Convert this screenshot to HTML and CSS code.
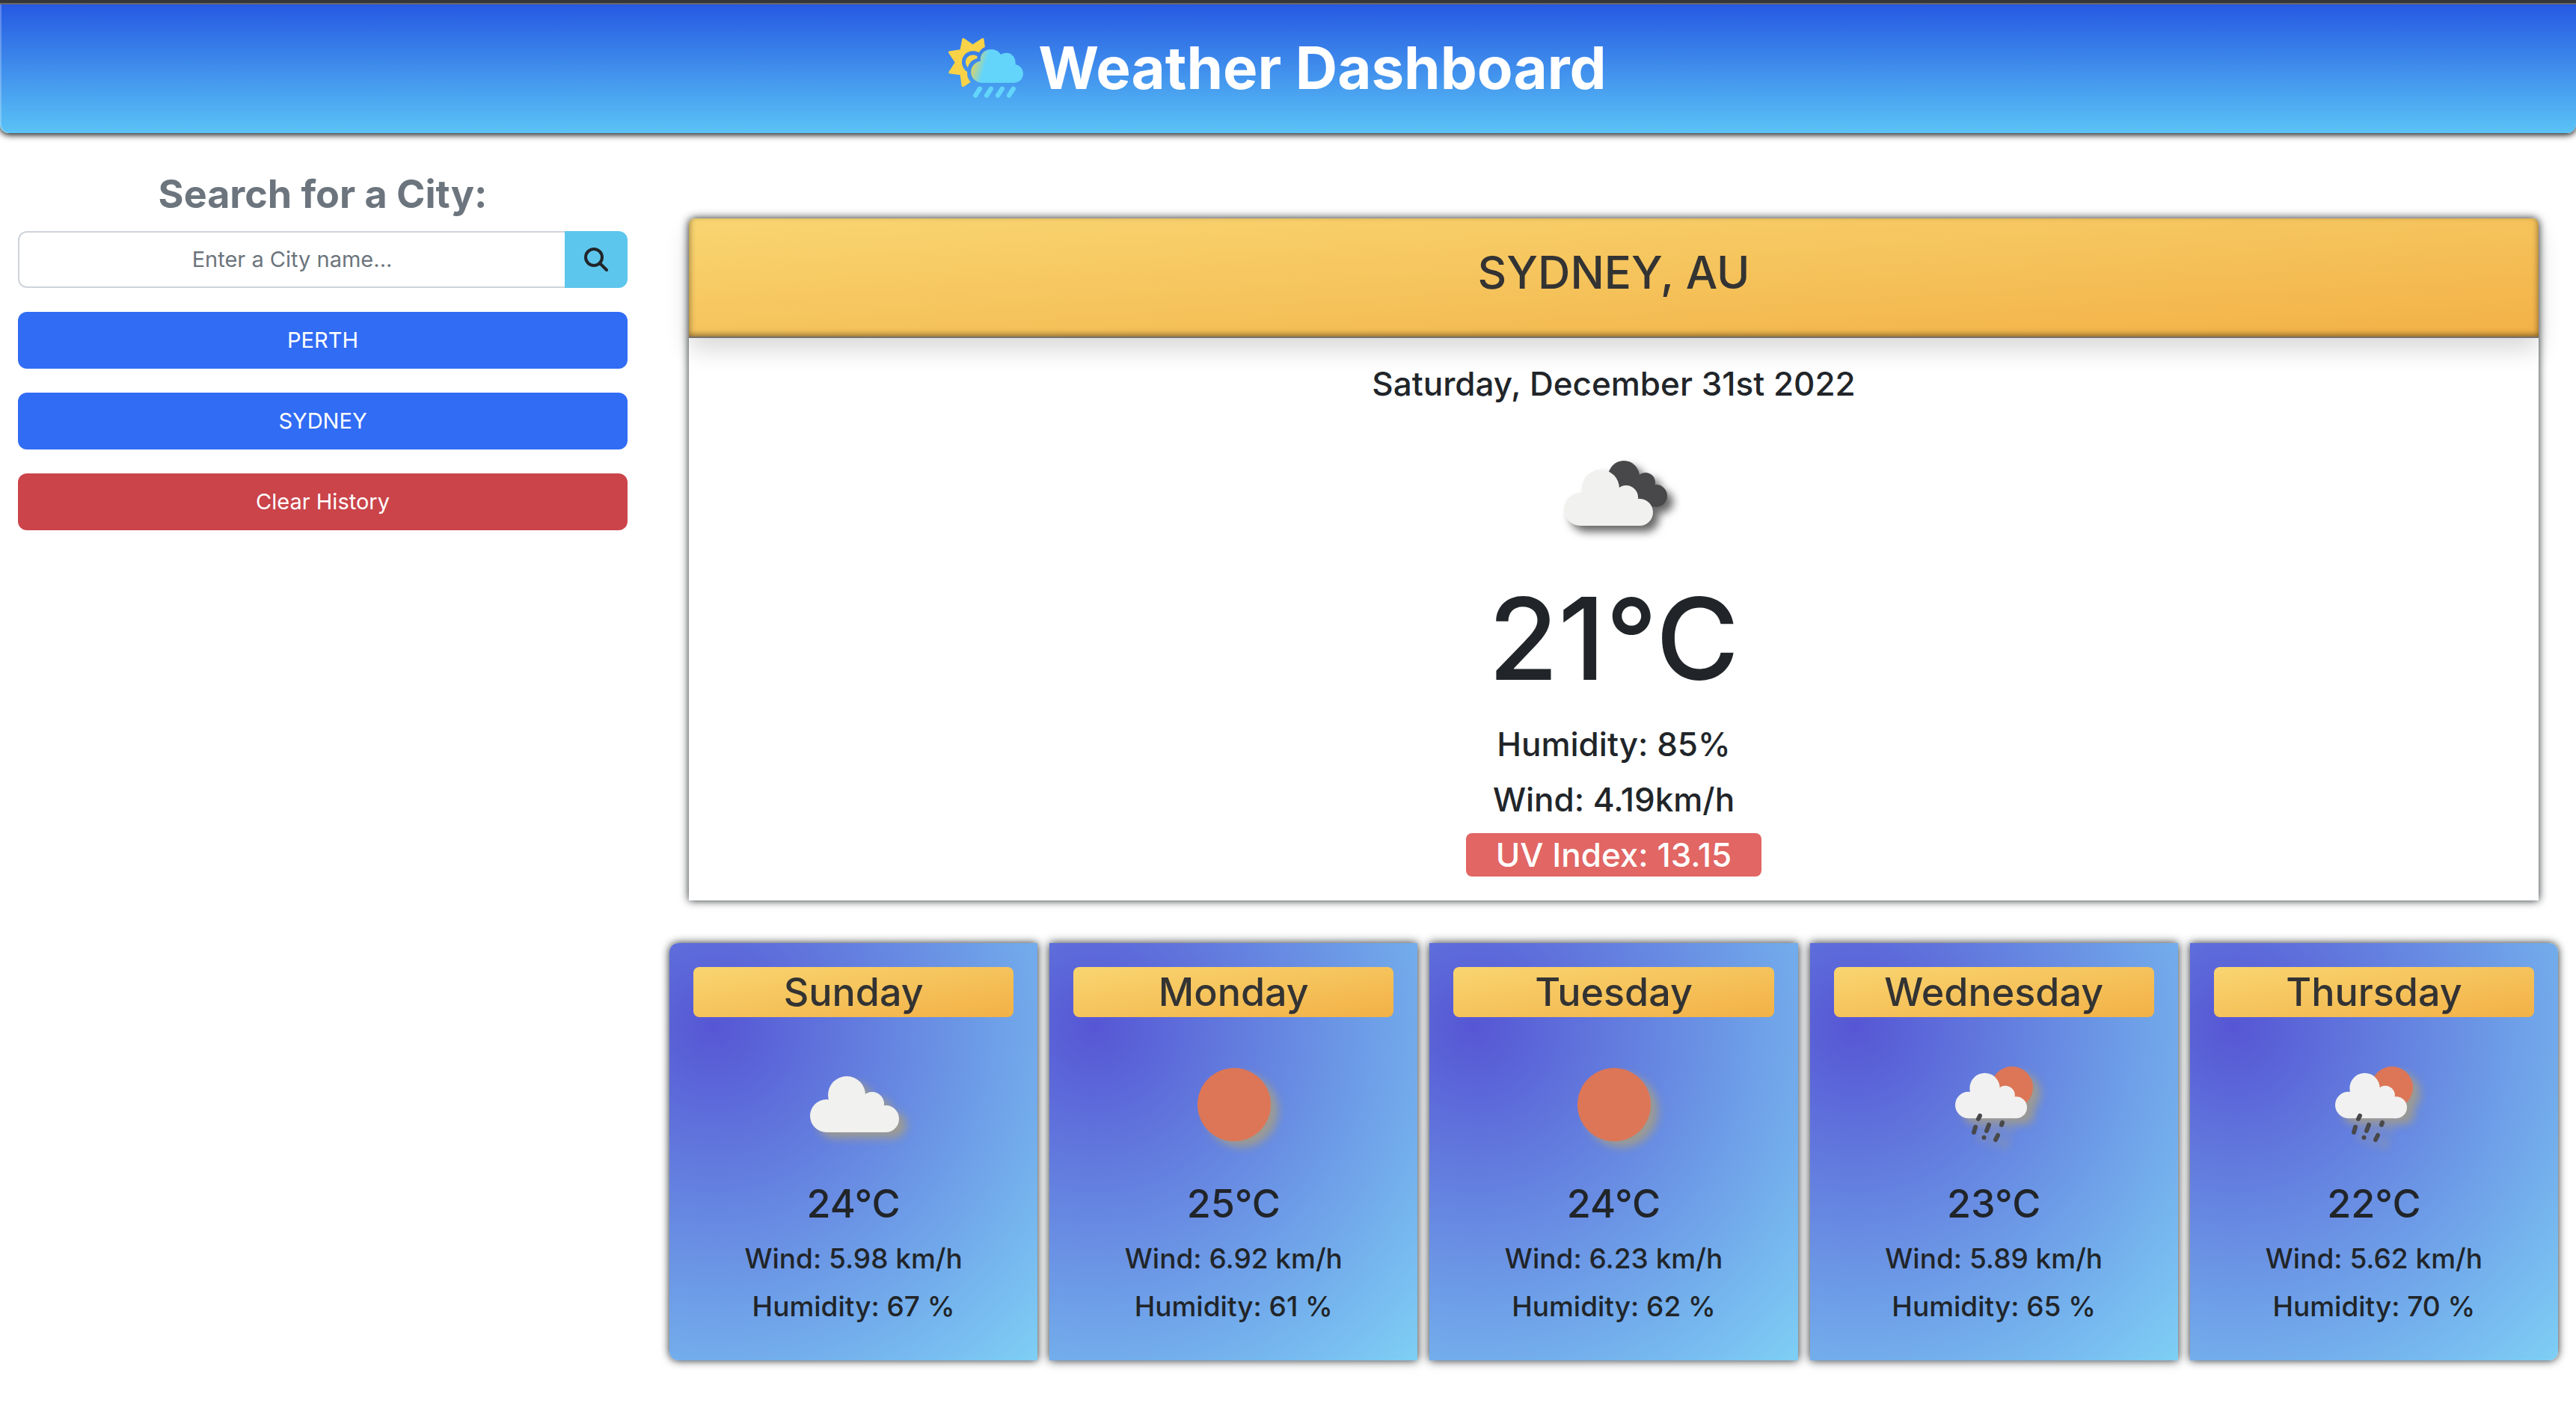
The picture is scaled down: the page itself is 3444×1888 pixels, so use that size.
FILE: index.html
```html
<!DOCTYPE html>
<html lang="en">
<head>
<meta charset="utf-8">
<meta name="viewport" content="width=device-width, initial-scale=1">
<title>Weather Dashboard</title>
<link rel="stylesheet" href="styles.css">
</head>
<body>
<svg class="sprite" aria-hidden="true">
  <symbol id="cloud" viewBox="0 0 119 75">
    <circle cx="22" cy="53" r="22"/>
    <circle cx="49" cy="25" r="25"/>
    <circle cx="83" cy="37" r="16"/>
    <circle cx="101" cy="57" r="18"/>
    <path d="M22 75V34l27-14 34 14 18 20v21z"/>
  </symbol>
  <symbol id="sun" viewBox="0 0 200 200">
    <circle cx="101" cy="109" r="49" fill="#dc7657"/>
  </symbol>
  <symbol id="rain" viewBox="0 0 200 200">
    <circle cx="124" cy="86" r="28" fill="#dc7657"/>
    <use href="#cloud" x="48" y="66" width="96" height="62" fill="#f1f1f1"/>
    <path d="M81 124l-2 4M75 139l-2 7M93 136l-3 8M111 133l-1 3M86.500 153v.1M105 150l-3 6" fill="none" stroke="#48484a" stroke-width="6" stroke-linecap="round"/>
  </symbol>
</svg>

<header class="banner">
  <svg class="banner-icon" viewBox="42 42 301 241" aria-hidden="true">
    <defs>
      <linearGradient id="sun-fade" gradientUnits="userSpaceOnUse" x1="105" y1="130" x2="200" y2="170">
        <stop offset=".55" stop-color="#f8d247"/>
        <stop offset="1" stop-color="#63d5fb"/>
      </linearGradient>
      <linearGradient id="cloud-fade" gradientUnits="userSpaceOnUse" x1="130" y1="165" x2="182" y2="180">
        <stop offset="0" stop-color="#e4d35c"/>
        <stop offset="1" stop-color="#63d5fb"/>
      </linearGradient>
    </defs>
    <path fill="url(#sun-fade)" d="M97 46c1-5 5-5 8-3l35 24 37-24c4-2 8-1 8 4l4 31c-11 4-19 12-24 22-8-4-16-6-25-6-24 0-44 20-44 44 0 17 9 32 22 40-2 16 2 29 14 40l-26 18c-5 3-10 2-11-3l-6-43-42-5c-5-1-5-5-3-8l24-37-25-38c-2-4-1-7 4-8l42-6z"/>
    <path fill="url(#sun-fade)" d="M157 114c-22-12-46 2-46 24 0 9 4 17 9 22 6-20 18-31 36-36 3-3 4-7 1-10z"/>
    <path fill="url(#cloud-fade)" d="M177 222a44 44 0 0 1-6-87.600C168 105 188 87 213 87c18 0 32 8 40 21 30-18 62 2 59 40 18 3 31 18 31 37 0 21-17 37-37 37z"/>
    <path stroke="#63d5fb" stroke-width="19" stroke-linecap="round" d="M168 246l-17 27M213 246l-17 27M258 246l-17 27M303 246l-17 27"/>
  </svg>
  <h1 class="banner-title">Weather Dashboard</h1>
</header>

<main class="layout">
  <aside class="sidebar">
    <h2 class="search-title"><label for="city">Search for a City:</label></h2>
    <form class="search">
      <input class="search-input" id="city" type="text" placeholder="Enter a City name...">
      <button class="search-button" type="button" aria-label="Search">
        <svg class="search-icon" viewBox="0 0 32 32" aria-hidden="true"><circle cx="13" cy="13" r="11"/><path d="M21 21l9 9"/></svg>
      </button>
    </form>
    <button class="side-button" type="button">PERTH</button>
    <button class="side-button" type="button">SYDNEY</button>
    <button class="side-button side-button-clear" type="button">Clear History</button>
  </aside>

  <div class="content">
    <section class="today">
      <h2 class="today-city">SYDNEY, AU</h2>
      <div class="today-body">
        <h3 class="today-line">Saturday, December 31st 2022</h3>
        <svg class="today-icon" viewBox="0 0 200 200" aria-hidden="true">
          <g fill="#48484a">
            <circle cx="113" cy="79" r="21"/>
            <circle cx="142" cy="87" r="13"/>
            <circle cx="156" cy="105" r="15"/>
            <path d="M113 79l29 0 14 20-4 21-30-20z"/>
          </g>
          <use href="#cloud" x="33" y="70" width="119" height="75" fill="#f1f1ef"/>
        </svg>
        <p class="today-temp">21°C</p>
        <p class="today-line">Humidity: 85%</p>
        <p class="today-line">Wind: 4.19km/h</p>
        <p class="today-line uv">UV Index: 13.15</p>
      </div>
    </section>

    <section class="forecast">
      <article class="day">
        <h3 class="day-name">Sunday</h3>
        <svg class="day-icon" viewBox="0 0 200 200" aria-hidden="true"><use href="#cloud" x="42" y="71" width="119" height="75" fill="#f1f1ef"/></svg>
        <p class="day-temp">24°C</p>
        <p class="day-line">Wind: 5.98 km/h</p>
        <p class="day-line">Humidity: 67 %</p>
      </article>
      <article class="day">
        <h3 class="day-name">Monday</h3>
        <svg class="day-icon" viewBox="0 0 200 200" aria-hidden="true"><use href="#sun"/></svg>
        <p class="day-temp">25°C</p>
        <p class="day-line">Wind: 6.92 km/h</p>
        <p class="day-line">Humidity: 61 %</p>
      </article>
      <article class="day">
        <h3 class="day-name">Tuesday</h3>
        <svg class="day-icon" viewBox="0 0 200 200" aria-hidden="true"><use href="#sun"/></svg>
        <p class="day-temp">24°C</p>
        <p class="day-line">Wind: 6.23 km/h</p>
        <p class="day-line">Humidity: 62 %</p>
      </article>
      <article class="day">
        <h3 class="day-name">Wednesday</h3>
        <svg class="day-icon" viewBox="0 0 200 200" aria-hidden="true"><use href="#rain"/></svg>
        <p class="day-temp">23°C</p>
        <p class="day-line">Wind: 5.89 km/h</p>
        <p class="day-line">Humidity: 65 %</p>
      </article>
      <article class="day">
        <h3 class="day-name">Thursday</h3>
        <svg class="day-icon" viewBox="0 0 200 200" aria-hidden="true"><use href="#rain"/></svg>
        <p class="day-temp">22°C</p>
        <p class="day-line">Wind: 5.62 km/h</p>
        <p class="day-line">Humidity: 70 %</p>
      </article>
    </section>
  </div>
</main>
</body>
</html>
```
FILE: styles.css
```css
* {
  box-sizing: border-box;
}

body {
  margin: 0;
  background: #fff;
  color: #212529;
  font-family: Inter, "Liberation Sans", sans-serif;
  font-size: 29px;
  line-height: 48px;
}

h1, h2, h3, p {
  margin: 0;
  font-weight: 500;
}

button, input {
  font: inherit;
}

.sprite {
  position: absolute;
  width: 0;
  height: 0;
}

.banner {
  display: flex;
  justify-content: center;
  align-items: center;
  gap: 20px;
  height: 178px;
  padding-right: 28px;
  border-top: 4px solid #35363a;
  border-radius: 0 0 12px 12px;
  background: linear-gradient(#2558e2, #5ac3f6);
  box-shadow: inset 0 2px #68696c, inset 2px 0 #ffffff40, 0 2px 10px #000;
}

.banner-icon {
  width: 100px;
  height: 80px;
}

.banner-title {
  color: #fff;
  font-size: 78px;
  line-height: 96px;
  font-weight: 700;
}

.layout {
  display: grid;
  grid-template-columns: 1fr 3fr;
}

.sidebar {
  display: flex;
  flex-direction: column;
  gap: 32px;
  padding: 48px 22px 48px 24px;
}

.search-title {
  margin-bottom: -16px;
  color: #6c757d;
  font-size: 52px;
  line-height: 67px;
  font-weight: 700;
  text-align: center;
}

.search {
  display: flex;
  height: 76px;
}

.search-input {
  flex: 1;
  min-width: 0;
  padding: 12px 24px;
  border: 2px solid #ced4da;
  border-right: 0;
  border-radius: 12px 0 0 12px;
  text-align: center;
}

.search-input::placeholder {
  color: #6c757d;
  opacity: 1;
}

.search-button {
  display: flex;
  justify-content: center;
  align-items: center;
  width: 84px;
  padding: 0;
  border: 0;
  border-radius: 0 12px 12px 0;
  background: #5dc6ec;
}

.search-icon {
  width: 32px;
  height: 32px;
  fill: none;
  stroke: #212529;
  stroke-width: 4px;
  stroke-linecap: round;
}

.side-button {
  height: 76px;
  border: 0;
  border-radius: 12px;
  background: #316cf4;
  color: #fff;
}

.side-button-clear {
  background: #ca444a;
}

.content {
  padding: 114px 24px 48px 34px;
}

.today {
  margin: 0 26px 57px;
  border-radius: 8px 8px 0 0;
  box-shadow: 0 0 12px #212529;
}

.today-city {
  height: 160px;
  padding-top: 32px;
  border-radius: 8px 8px 0 0;
  background: linear-gradient(to bottom right, #f9d571, #f2b146);
  box-shadow: inset 0 -2px #77726c, inset 0 -4px 8px #00000080, 0 16px 32px #00000026;
  color: #333;
  font-size: 60px;
  line-height: 80px;
  text-align: center;
}

.today-body {
  display: flex;
  flex-direction: column;
  align-items: center;
  padding: 32px;
}

.today-line {
  margin-bottom: 16px;
  font-size: 44px;
  line-height: 58px;
}

.today-icon {
  width: 200px;
  height: 200px;
  filter: drop-shadow(8px 8px 6px #00000099);
}

.today-temp {
  margin-bottom: 16px;
  font-size: 152px;
  line-height: 192px;
}

.uv {
  margin: 0;
  padding: 0 40px;
  border-radius: 8px;
  background: #e16664;
  color: #fff;
}

.forecast {
  display: grid;
  grid-template-columns: repeat(5, 1fr);
  gap: 16px;
}

.day {
  display: flex;
  flex-direction: column;
  align-items: center;
  padding: 32px;
  background: radial-gradient(circle at 12% 20%, #5656d4, #7ecff5);
  box-shadow: 0 0 12px #212529;
}

.day:first-child {
  border-radius: 12px 0 0 12px;
}

.day:last-child {
  border-radius: 0 12px 12px 0;
}

.day-name {
  align-self: stretch;
  border-radius: 8px;
  background: linear-gradient(to bottom right, #f9d571, #f2b146);
  color: #333;
  font-size: 52px;
  line-height: 67px;
  text-align: center;
}

.day-icon {
  width: 200px;
  height: 200px;
  margin: 8px 0;
  filter: drop-shadow(10px 8px 6px #9c9a92);
}

.day-temp {
  margin-bottom: 16px;
  font-size: 52px;
  line-height: 67px;
}

.day-line {
  margin-bottom: 16px;
  font-size: 37px;
  line-height: 48px;
}
```
